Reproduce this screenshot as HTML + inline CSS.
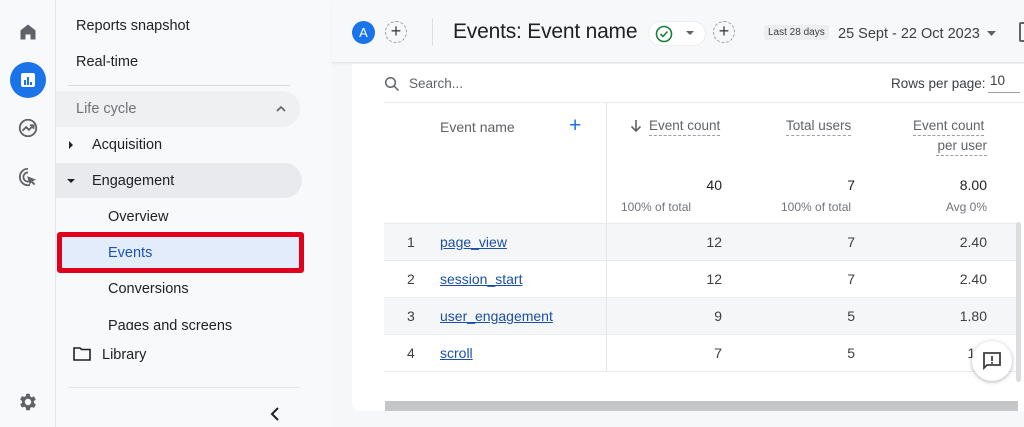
<!DOCTYPE html>
<html><head><meta charset="utf-8"><style>
*{margin:0;padding:0;box-sizing:border-box}
body{width:1024px;height:427px;overflow:hidden;background:#f5f7f9;font-family:"Liberation Sans",Arial,sans-serif;color:#202124;position:relative}
.a{position:absolute;white-space:nowrap}
.rail{left:0;top:0;width:56px;height:427px;background:#f8f9fa;border-right:1px solid #e3e5e8}
.nav{left:56px;top:0;width:276px;height:427px;background:#f8f9fa}
.t{font-size:14.5px;color:#202124}
.r{text-align:right}
.num{font-size:14px;color:#3c4043}
.lnk{font-size:14px;color:#1a4fa8;text-decoration:underline}
.hd{font-size:13.5px;color:#5f6368;border-bottom:1px dashed #9aa0a6;line-height:18px}
.sub{font-size:12px;color:#70757a}
</style></head><body>
<div class="a rail"></div>
<svg class="a" style="left:18px;top:22px" width="20" height="20" viewBox="0 0 24 24"><path d="M12 3L3 10v11h6v-6h6v6h6V10z" fill="#5f6368"/></svg>
<div class="a" style="left:10px;top:62px;width:36px;height:36px;border-radius:50%;background:#1a73e8"></div>
<svg class="a" style="left:19px;top:71px" width="18" height="18" viewBox="0 0 18 18"><rect x="2" y="2" width="14" height="14" rx="2" fill="#fff"/><rect x="5" y="9" width="2" height="5" fill="#1a73e8"/><rect x="8" y="6" width="2" height="8" fill="#1a73e8"/><rect x="11" y="11" width="2" height="3" fill="#1a73e8"/></svg>
<svg class="a" style="left:17px;top:117px" width="22" height="22" viewBox="0 0 24 24"><circle cx="12" cy="12" r="9" fill="none" stroke="#5f6368" stroke-width="2"/><path d="M6 15l4-4 3 3 5-5M14 9h4v4" fill="none" stroke="#5f6368" stroke-width="2"/></svg>
<svg class="a" style="left:17px;top:166px" width="22" height="22" viewBox="0 0 24 24"><path d="M12 3a9 9 0 1 0 2 17.8M12 7a5 5 0 1 0 1 9.9" fill="none" stroke="#5f6368" stroke-width="2"/><path d="M11 11l10 4-4 1.5 3 3-1.5 1.5-3-3L14 21z" fill="#5f6368"/></svg>
<svg class="a" style="left:17px;top:391px" width="22" height="22" viewBox="0 0 24 24"><path d="M19.4 13a7.5 7.5 0 0 0 0-2l2.1-1.6-2-3.5-2.5 1a7 7 0 0 0-1.7-1L15 3h-4l-.4 2.6a7 7 0 0 0-1.7 1l-2.5-1-2 3.5L6.6 11a7.5 7.5 0 0 0 0 2l-2.1 1.6 2 3.5 2.5-1a7 7 0 0 0 1.7 1L11 21h4l.4-2.6a7 7 0 0 0 1.7-1l2.5 1 2-3.5zM13 15.5a3.5 3.5 0 1 1 0-7 3.5 3.5 0 0 1 0 7z" fill="#5f6368" transform="translate(-1 0)"/></svg>
<div class="a nav"></div>
<div class="a t" style="left:76px;top:18px">Reports snapshot</div>
<div class="a t" style="left:76px;top:54px">Real-time</div>
<div class="a" style="left:68px;top:85px;width:222px;height:1px;background:#dadce0"></div>
<div class="a" style="left:56px;top:91px;width:244px;height:36px;background:#eef0f2;border-radius:0 18px 18px 0"></div>
<div class="a t" style="left:76px;top:101px;color:#6f7377">Life cycle</div>
<svg class="a" style="left:274px;top:102px" width="14" height="14" viewBox="0 0 14 14"><path d="M3 9l4-4 4 4" fill="none" stroke="#5f6368" stroke-width="1.6"/></svg>
<svg class="a" style="left:67px;top:140px" width="8" height="10"><path d="M2 1l4 4-4 4z" fill="#202124"/></svg>
<div class="a t" style="left:92px;top:137px">Acquisition</div>
<div class="a" style="left:56px;top:163px;width:246px;height:35px;background:#e8eaed;border-radius:0 18px 18px 0"></div>
<svg class="a" style="left:66px;top:177px" width="10" height="8"><path d="M1 2h8L5 6z" fill="#202124"/></svg>
<div class="a t" style="left:92px;top:173px">Engagement</div>
<div class="a t" style="left:108px;top:209px">Overview</div>
<div class="a" style="left:57px;top:232px;width:247px;height:41px;border:5px solid #e0001b;border-radius:3px;background:#e3ecfb"></div>
<div class="a t" style="left:108px;top:245px;color:#1a55b5">Events</div>
<div class="a t" style="left:108px;top:281px">Conversions</div>
<div class="a" style="left:108px;top:317px;height:13px;overflow:hidden"><span class="t">Pages and screens</span></div>
<svg class="a" style="left:73px;top:346px" width="18" height="15" viewBox="0 0 18 15"><path d="M1 2h6l1.5 1.5H17V14H1z" fill="none" stroke="#202124" stroke-width="1.6"/></svg>
<div class="a t" style="left:102px;top:347px">Library</div>
<div class="a" style="left:68px;top:387px;width:232px;height:1px;background:#e3e5e8"></div>
<svg class="a" style="left:269px;top:406px" width="12" height="16"><path d="M9 2L3 8l6 6" fill="none" stroke="#202124" stroke-width="2"/></svg>
<div class="a" style="left:332px;top:0;width:692px;height:63px;background:#f7f8fa;border-bottom:1px solid #e6e8eb;box-shadow:0 1px 2px rgba(0,0,0,.06)"></div>
<div class="a" style="left:352px;top:21px;width:23px;height:23px;border-radius:50%;background:#1a73e8;color:#fff;font-size:13px;text-align:center;line-height:23px">A</div>
<div class="a" style="left:385px;top:21px;width:22px;height:22px;border-radius:50%;border:1px dashed #9aa0a6;text-align:center;line-height:19px;font-size:18px;color:#3c4043">+</div>
<div class="a" style="left:432px;top:18px;width:1px;height:28px;background:#e0e0e0"></div>
<div class="a" style="left:453px;top:20px;font-size:21px;color:#202124;letter-spacing:-0.2px">Events: Event name</div>
<div class="a" style="left:648px;top:21px;width:58px;height:25px;border-radius:13px;background:#fff;border:1px solid #eceef0"></div>
<svg class="a" style="left:655px;top:25px" width="18" height="18" viewBox="0 0 18 18"><circle cx="9" cy="9" r="7.5" fill="none" stroke="#188038" stroke-width="1.6"/><path d="M5.5 9l2.5 2.5 4.5-5" fill="none" stroke="#188038" stroke-width="1.6"/></svg>
<svg class="a" style="left:686px;top:31px" width="8" height="5"><path d="M0 0h8L4 4z" fill="#5f6368"/></svg>
<div class="a" style="left:713px;top:21px;width:22px;height:22px;border-radius:50%;border:1px dashed #9aa0a6;text-align:center;line-height:19px;font-size:18px;color:#3c4043">+</div>
<div class="a" style="left:764px;top:25px;padding:2px 4px;background:#eceef0;border-radius:3px;font-size:10px;color:#3c4043">Last 28 days</div>
<div class="a" style="left:838px;top:26px;font-size:14.5px;color:#3c4043">25 Sept - 22 Oct 2023</div>
<svg class="a" style="left:987px;top:31px" width="9" height="5"><path d="M0 0h9L4.5 5z" fill="#5f6368"/></svg>
<div class="a" style="left:1019px;top:22px;width:8px;height:20px;border:2px solid #5f6368;border-radius:2px"></div>
<div class="a" style="left:352px;top:64px;width:680px;height:347px;background:#fff;border-radius:0 0 8px 8px"></div>
<svg class="a" style="left:384px;top:76px" width="16" height="16" viewBox="0 0 16 16"><circle cx="6.5" cy="6.5" r="4.8" fill="none" stroke="#5f6368" stroke-width="1.5"/><path d="M10 10l4.5 4.5" stroke="#5f6368" stroke-width="1.5"/></svg>
<div class="a" style="left:409px;top:76px;font-size:13.5px;color:#5f6368">Search...</div>
<div class="a" style="left:891px;top:76px;font-size:13.5px;color:#3c4043">Rows per page:</div>
<div class="a" style="left:990px;top:73px;font-size:13.5px;color:#3c4043">10</div>
<div class="a" style="left:988px;top:92px;width:32px;height:1px;background:#9aa0a6"></div>
<div class="a" style="left:384px;top:102px;width:640px;height:1px;background:#e8eaed"></div>
<div class="a" style="left:606px;top:103px;width:1px;height:268px;background:#e3e5e8"></div>
<div class="a" style="left:440px;top:119px;font-size:14px;color:#5f6368">Event name</div>
<div class="a" style="left:569px;top:114px;font-size:21px;color:#1a73e8">+</div>
<svg class="a" style="left:630px;top:119px" width="12" height="14" viewBox="0 0 12 14"><path d="M6 1v11M1.5 7.5L6 12l4.5-4.5" fill="none" stroke="#5f6368" stroke-width="1.6"/></svg>
<div class="a hd" style="left:649px;top:117px">Event count</div>
<div class="a hd" style="left:786px;top:117px">Total users</div>
<div class="a hd" style="left:913px;top:117px">Event count</div>
<div class="a hd" style="left:936px;top:137px;width:51px;text-align:right">per user</div>
<div class="a num r" style="left:660px;top:177px;width:62px;font-size:14px;color:#202124">40</div>
<div class="a num r" style="left:800px;top:177px;width:55px;color:#202124">7</div>
<div class="a num r" style="left:920px;top:177px;width:67px;color:#202124">8.00</div>
<div class="a sub" style="left:621px;top:200px">100% of total</div>
<div class="a sub" style="left:781px;top:200px">100% of total</div>
<div class="a sub r" style="left:920px;top:200px;width:67px">Avg 0%</div>
<div class="a" style="left:384px;top:223px;width:634px;height:1px;background:#e8eaed"></div>
<div class="a" style="left:384px;top:224px;width:634px;height:36px;background:#f5f6f7"></div>
<div class="a" style="left:384px;top:298px;width:634px;height:36px;background:#f5f6f7"></div>
<div class="a" style="left:384px;top:260px;width:634px;height:1px;background:#e8eaed"></div>
<div class="a" style="left:384px;top:297px;width:634px;height:1px;background:#e8eaed"></div>
<div class="a" style="left:384px;top:334px;width:634px;height:1px;background:#e8eaed"></div>
<div class="a" style="left:384px;top:371px;width:634px;height:1px;background:#e8eaed"></div>
<div class="a" style="left:606px;top:224px;width:1px;height:147px;background:#e3e5e8"></div>
<div class="a num" style="left:407px;top:234px">1</div><div class="a lnk" style="left:440px;top:234px">page_view</div>
<div class="a num r" style="left:680px;top:234px;width:42px">12</div><div class="a num r" style="left:820px;top:234px;width:35px">7</div><div class="a num r" style="left:940px;top:234px;width:47px">2.40</div>
<div class="a num" style="left:407px;top:271px">2</div><div class="a lnk" style="left:440px;top:271px">session_start</div>
<div class="a num r" style="left:680px;top:271px;width:42px">12</div><div class="a num r" style="left:820px;top:271px;width:35px">7</div><div class="a num r" style="left:940px;top:271px;width:47px">2.40</div>
<div class="a num" style="left:407px;top:308px">3</div><div class="a lnk" style="left:440px;top:308px">user_engagement</div>
<div class="a num r" style="left:680px;top:308px;width:42px">9</div><div class="a num r" style="left:820px;top:308px;width:35px">5</div><div class="a num r" style="left:940px;top:308px;width:47px">1.80</div>
<div class="a num" style="left:407px;top:345px">4</div><div class="a lnk" style="left:440px;top:345px">scroll</div>
<div class="a num r" style="left:680px;top:345px;width:42px">7</div><div class="a num r" style="left:820px;top:345px;width:35px">5</div><div class="a num r" style="left:940px;top:345px;width:47px">1.7</div>
<div class="a" style="left:1016px;top:222px;width:5px;height:160px;background:#dadce0;border-radius:3px"></div>
<div class="a" style="left:972px;top:341px;width:40px;height:40px;border-radius:50%;background:#fff;box-shadow:0 1px 4px rgba(0,0,0,.3)"></div>
<svg class="a" style="left:982px;top:351px" width="20" height="20" viewBox="0 0 20 20"><path d="M2 2h16v12H5l-3 3z" fill="none" stroke="#3c4043" stroke-width="1.8"/><rect x="9.1" y="5" width="1.8" height="5" fill="#3c4043"/><rect x="9.1" y="11" width="1.8" height="1.8" fill="#3c4043"/></svg>
<div class="a" style="left:385px;top:401px;width:633px;height:10px;background:#c4c6c8"></div>
</body></html>
